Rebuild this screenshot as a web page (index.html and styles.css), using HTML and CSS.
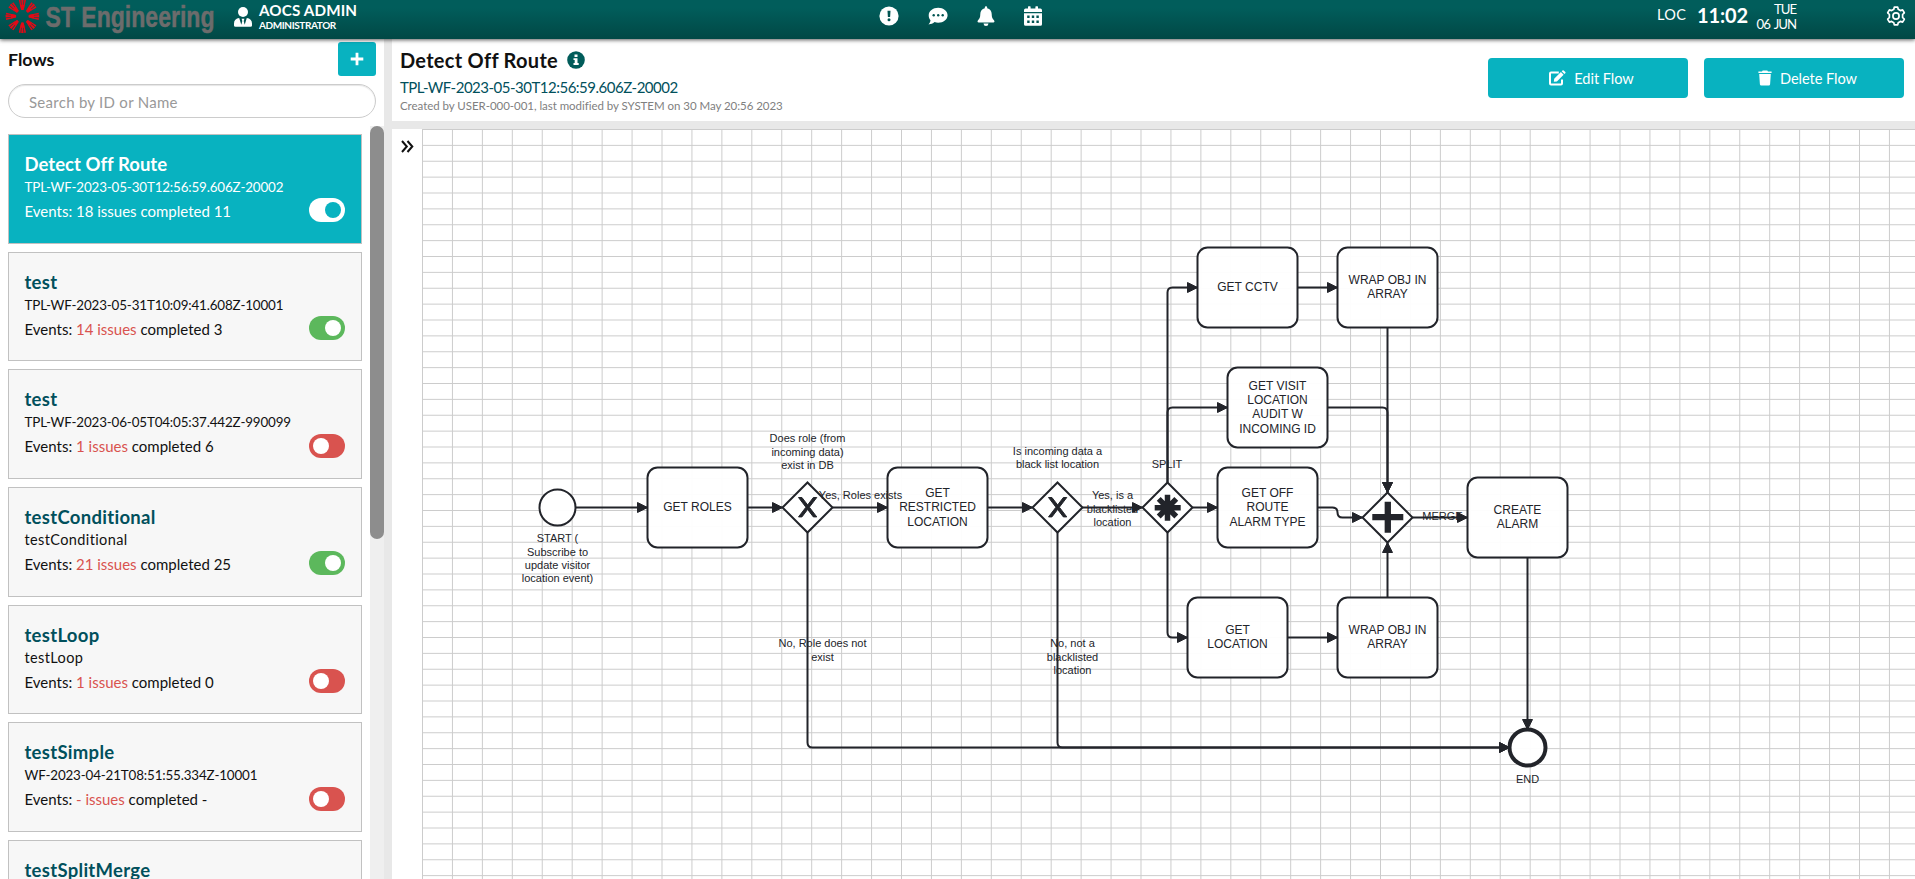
FILE: index.html
```
<!DOCTYPE html>
<html lang="en">
<head>
<meta charset="utf-8">
<title>Flows</title>
<link rel="stylesheet" href="styles.css">
</head>
<body>
<header class="topbar">
  <div class="brand">
    <svg class="brand-logo" width="220" height="39" viewBox="0 0 220 39">
      <defs>
        <g id="ray">
          <path d="M-3.6 -16.2 L-1.9 -16.6 L-.9 -6.5 L-1.3 -6.4Z M-1.2 -16.8 H1.2 L.4 -6.3 H-.4Z M3.6 -16.2 L1.9 -16.6 L.9 -6.5 L1.3 -6.4Z"/>
          <path d="M-2.2 -11.5 H2.2 L1.2 -6.3 H-1.2Z"/>
        </g>
      </defs>
      <g class="brand-mark" transform="translate(22.4 16.3)">
        <use href="#ray"/><use href="#ray" transform="rotate(45)"/><use href="#ray" transform="rotate(90)"/><use href="#ray" transform="rotate(135)"/>
        <use href="#ray" transform="rotate(180)"/><use href="#ray" transform="rotate(225)"/><use href="#ray" transform="rotate(270)"/><use href="#ray" transform="rotate(315)"/>
      </g>
      <text class="brand-text" x="45.5" y="27" textLength="169" lengthAdjust="spacingAndGlyphs">ST Engineering</text>
    </svg>
  </div>
  <div class="user">
    <svg width="18" height="20" viewBox="0 0 18 20" fill="#fff"><circle cx="9" cy="5" r="5"/><path fill-rule="evenodd" d="M5.2 11 C2 11.3 0 13.4 0 16.4 V18.4 Q0 19.8 1.5 19.8 H16.5 Q18 19.8 18 18.4 V16.4 C18 13.4 16 11.3 12.8 11 L10.7 17.8 L9.7 14 L10.4 11.8 H7.6 L8.3 14 L7.3 17.8 Z"/></svg>
    <div class="user-text">
      <div class="user-name">AOCS ADMIN</div>
      <div class="user-role">ADMINISTRATOR</div>
    </div>
  </div>
  <nav class="shortcuts">
    <svg width="20" height="20" viewBox="0 0 20 20"><circle cx="10" cy="10" r="9.6" fill="#fff"/><path d="M8.5 4.7 h3 l-.4 6.3 h-2.2z" fill="#015452"/><circle cx="10" cy="13.7" r="1.5" fill="#015452"/></svg>
    <svg width="20" height="20" viewBox="0 0 20 20"><path d="M10.2 1.7 C15.4 1.7 19.6 5 19.6 9.2 S15.4 16.7 10.2 16.7 C8.9 16.7 7.7 16.5 6.6 16.1 C5 17.4 3 18.4 .5 18.4 C1.6 17.2 2.4 15.8 2.5 14.3 C1.3 12.9 .7 11.1 .7 9.2 C.7 5 5 1.7 10.2 1.7Z" fill="#fff"/><g fill="#015452"><circle cx="5.7" cy="9.2" r="1.2"/><circle cx="10.2" cy="9.2" r="1.2"/><circle cx="14.7" cy="9.2" r="1.2"/></g></svg>
    <svg width="20" height="20" viewBox="0 0 20 20" fill="#fff"><path d="M10 .2 Q11.2 .2 11.2 1.5 V2.2 C14 2.8 15.7 5 15.7 7.9 C15.7 11.3 16.5 12.6 17.8 14 C19 15.2 18.5 16.4 17.3 16.4 H2.7 C1.5 16.4 1 15.2 2.2 14 C3.5 12.6 4.3 11.3 4.3 7.9 C4.3 5 6 2.8 8.8 2.2 V1.5 Q8.8 .2 10 .2Z M7.5 17.4 H12.5 Q12.3 19.9 10 19.9 T7.5 17.4Z"/></svg>
    <svg width="20" height="20" viewBox="0 0 20 20"><path d="M1 6 V4.2 Q1 2.6 2.6 2.6 H5 V.8 Q5 .2 5.6 .2 H7 Q7.6 .2 7.6 .8 V2.6 H12.4 V.8 Q12.4 .2 13 .2 H14.4 Q15 .2 15 .8 V2.6 H17.4 Q19 2.6 19 4.2 V6Z M1 7.2 H19 V18.2 Q19 19.8 17.4 19.8 H2.6 Q1 19.8 1 18.2Z" fill="#fff"/><path d="M4.2 9.6h2.4V12H4.2z M8.8 9.6h2.4V12H8.8z M13.4 9.6h2.4V12h-2.4z M4.2 14.6h2.4V17H4.2z M8.8 14.6h2.4V17H8.8z M13.4 14.6h2.4V17h-2.4z" fill="#015452"/></svg>
  </nav>
  <div class="clock">
    <span class="clock-zone">LOC</span>
    <span class="clock-time">11:02</span>
    <div class="clock-date"><div>TUE</div><div>06 JUN</div></div>
  </div>
  <svg class="settings" width="20" height="20" viewBox="0 0 20 20" fill="none" stroke="#fff" stroke-width="1.7" stroke-linejoin="round"><path d="M7.8 3.3 L8.3 1.1 H11.7 L12.2 3.3 L14.4 4.6 L16.6 3.9 L18.3 6.8 L16.6 8.5 V11.5 L18.3 13.2 L16.6 16.1 L14.4 15.4 L12.2 16.7 L11.7 18.9 H8.3 L7.8 16.7 L5.6 15.4 L3.4 16.1 L1.7 13.2 L3.4 11.5 V8.5 L1.7 6.8 L3.4 3.9 L5.6 4.6Z"/><circle cx="10" cy="10" r="3.1"/></svg>
</header>

<div class="workspace">
  <aside class="sidebar">
    <div class="sidebar-head">
      <h2>Flows</h2>
      <button class="add"><svg width="14" height="14" viewBox="0 0 14 14"><path d="M7 .7V13.3M.7 7H13.3" stroke="#fff" stroke-width="2.8"/></svg></button>
    </div>
    <input class="search" type="text" placeholder="Search by ID or Name">
    <div class="list-wrap">
      <div class="list">
        <article class="card selected">
          <div class="card-text"><h3>Detect Off Route</h3><p class="id">TPL-WF-2023-05-30T12:56:59.606Z-20002</p><p class="events">Events: <em>18 issues</em> completed 11</p></div>
          <span class="toggle on"></span>
        </article>
        <article class="card">
          <div class="card-text"><h3>test</h3><p class="id">TPL-WF-2023-05-31T10:09:41.608Z-10001</p><p class="events">Events: <em>14 issues</em> completed 3</p></div>
          <span class="toggle on"></span>
        </article>
        <article class="card">
          <div class="card-text"><h3>test</h3><p class="id">TPL-WF-2023-06-05T04:05:37.442Z-990099</p><p class="events">Events: <em>1 issues</em> completed 6</p></div>
          <span class="toggle"></span>
        </article>
        <article class="card">
          <div class="card-text"><h3>testConditional</h3><p class="id word">testConditional</p><p class="events">Events: <em>21 issues</em> completed 25</p></div>
          <span class="toggle on"></span>
        </article>
        <article class="card">
          <div class="card-text"><h3>testLoop</h3><p class="id word">testLoop</p><p class="events">Events: <em>1 issues</em> completed 0</p></div>
          <span class="toggle"></span>
        </article>
        <article class="card">
          <div class="card-text"><h3>testSimple</h3><p class="id">WF-2023-04-21T08:51:55.334Z-10001</p><p class="events">Events: <em>- issues</em> completed -</p></div>
          <span class="toggle"></span>
        </article>
        <article class="card">
          <div class="card-text"><h3>testSplitMerge</h3></div>
        </article>
      </div>
      <div class="scrollbar"><div class="thumb"></div></div>
    </div>
  </aside>

  <main class="main">
    <section class="flow-head">
      <div class="flow-info">
        <div class="flow-title"><h1>Detect Off Route</h1>
          <svg width="18" height="18" viewBox="0 0 18 18"><circle cx="9" cy="9" r="8.8" fill="#015c5a"/><path d="M7.5 3.5h3v2.6h-3z M6.500 7.200h4v4.900h1.200v1.900H6.500v-1.900h1.200V9.100H6.500z" fill="#fff"/></svg>
        </div>
        <p class="flow-id">TPL-WF-2023-05-30T12:56:59.606Z-20002</p>
        <p class="flow-meta">Created by USER-000-001, last modified by SYSTEM on 30 May 20:56 2023</p>
      </div>
      <div class="actions">
        <button class="action"><svg width="17" height="16" viewBox="0 0 17 16"><path d="M9.800 2.600 H2 Q1 2.600 1 3.600 V13.600 Q1 14.600 2 14.600 H12 Q13 14.600 13 13.600 V9.500" fill="none" stroke="#fff" stroke-width="2"/><path d="M5.200 8.700 L11.900 2 L14.600 4.700 L7.900 11.400 L4.800 11.800Z M12.700 1.200 L13.500 .4 Q14.100 -.1 14.700 .4 L16.300 2 Q16.800 2.600 16.300 3.200 L15.400 4Z" fill="#fff"/></svg>Edit Flow</button>
        <button class="action"><svg width="14" height="16" viewBox="0 0 14 16" fill="#fff"><path d="M.4 1.500 H4 L4.700 .5 H9.300 L10 1.500 H13.600 V3.100 H.4Z M1.200 4 H12.800 L12.100 14.200 Q12 15.500 10.700 15.500 H3.300 Q2 15.500 1.900 14.200Z"/></svg>Delete Flow</button>
      </div>
    </section>
    <section class="canvas">
      <div class="palette"><svg width="13" height="13" viewBox="0 0 13 13" fill="none" stroke="#111" stroke-width="2"><path d="M1 1 L5.800 6.500 L1 12 M6.500 1 L11.300 6.500 L6.500 12"/></svg></div>
      <div class="grid">
        <svg class="diagram" width="1493" height="750" viewBox="422 129 1493 750">
          <defs>
            <marker id="arrow" viewBox="0 0 20 20" refX="11" refY="10" markerWidth="20" markerHeight="20" markerUnits="userSpaceOnUse" orient="auto"><path d="M1 5 L11 10 L1 15Z" class="tip"/></marker>
            <path id="cross" d="M-9 -9.700 l7.430 9.710 -7.430 9.710 3.430 0 5.714 -7.464 5.714 7.464 3.430 0 -7.430 -9.710 7.430 -9.710 -3.430 0 -5.714 7.464 -5.714 -7.464Z"/>
          </defs>

          <g class="edges">
            <path d="M575.500 507.500H647.500"/>
            <path d="M747.500 507.500H782.500"/>
            <path d="M832.500 507.500H887.500"/>
            <path d="M987.500 507.500H1032.500"/>
            <path d="M1082.500 507.500H1142.500"/>
            <path d="M1192.500 507.500H1217.500"/>
            <path d="M1167.500 482.500V292.500Q1167.500 287.500 1172.500 287.500H1197.500"/>
            <path d="M1167.500 482.500V412.500Q1167.500 407.500 1172.500 407.500H1227.500"/>
            <path d="M1167.500 532.500V632.500Q1167.500 637.500 1172.500 637.500H1187.500"/>
            <path d="M1297.500 287.500H1337.500"/>
            <path d="M1287.500 637.500H1337.500"/>
            <path d="M1387.500 327.500V492.500"/>
            <path d="M1327.500 407.500H1382.500Q1387.500 407.500 1387.500 412.500V492.500"/>
            <path d="M1317.500 507.500H1332.500Q1337.500 507.500 1337.500 512.500Q1337.500 517.500 1342.500 517.500H1362.500"/>
            <path d="M1387.500 597.500V542.500"/>
            <path d="M1412.500 517.500H1467.500"/>
            <path d="M1527.500 557.500V729.500"/>
            <path d="M807.500 532.500V742.500Q807.500 747.500 812.500 747.500H1509.500"/>
            <path d="M1057.500 532.500V742.500Q1057.500 747.500 1062.500 747.500H1509.500"/>
          </g>

          <g class="shapes">
            <circle cx="557.500" cy="507.500" r="18"/>
            <circle cx="1527.500" cy="747.500" r="18" class="end"/>
            <rect x="647.500" y="467.500" width="100" height="80" rx="10"/>
            <rect x="887.500" y="467.500" width="100" height="80" rx="10"/>
            <rect x="1197.500" y="247.500" width="100" height="80" rx="10"/>
            <rect x="1337.500" y="247.500" width="100" height="80" rx="10"/>
            <rect x="1227.500" y="367.500" width="100" height="80" rx="10"/>
            <rect x="1217.500" y="467.500" width="100" height="80" rx="10"/>
            <rect x="1467.500" y="477.500" width="100" height="80" rx="10"/>
            <rect x="1187.500" y="597.500" width="100" height="80" rx="10"/>
            <rect x="1337.500" y="597.500" width="100" height="80" rx="10"/>
            <path d="M807.500 482.500l25 25l-25 25l-25 -25Z"/>
            <path d="M1057.500 482.500l25 25l-25 25l-25 -25Z"/>
            <path d="M1167.500 482.500l25 25l-25 25l-25 -25Z"/>
            <path d="M1387.500 492.500l25 25l-25 25l-25 -25Z"/>
          </g>
          <g class="signs">
            <use href="#cross" transform="translate(807.500 507.200)"/>
            <use href="#cross" transform="translate(1057.500 507.200)"/>
            <path class="star" d="M1167.500 494.700v26M1154.700 507.700h26M1158.700 498.900l17.600 17.600M1176.300 498.900l-17.600 17.600"/>
            <path class="plus" d="M1387.800 501.700v31M1372.300 517.200h31"/>
          </g>

          <g class="task-labels">
            <text x="697.500" y="511">GET ROLES</text>
            <text><tspan x="937.500" y="497">GET</tspan><tspan x="937.500" y="511">RESTRICTED</tspan><tspan x="937.500" y="526">LOCATION</tspan></text>
            <text x="1247.500" y="291">GET CCTV</text>
            <text><tspan x="1387.500" y="284">WRAP OBJ IN</tspan><tspan x="1387.500" y="298">ARRAY</tspan></text>
            <text><tspan x="1277.500" y="390">GET VISIT</tspan><tspan x="1277.500" y="404">LOCATION</tspan><tspan x="1277.500" y="418">AUDIT W</tspan><tspan x="1277.500" y="433">INCOMING ID</tspan></text>
            <text><tspan x="1267.500" y="497">GET OFF</tspan><tspan x="1267.500" y="511">ROUTE</tspan><tspan x="1267.500" y="526">ALARM TYPE</tspan></text>
            <text><tspan x="1517.500" y="514">CREATE</tspan><tspan x="1517.500" y="528">ALARM</tspan></text>
            <text><tspan x="1237.500" y="634">GET</tspan><tspan x="1237.500" y="648">LOCATION</tspan></text>
            <text><tspan x="1387.500" y="634">WRAP OBJ IN</tspan><tspan x="1387.500" y="648">ARRAY</tspan></text>
          </g>
          <g class="notes">
            <text><tspan x="557.500" y="542">START (</tspan><tspan x="557.500" y="556">Subscribe to</tspan><tspan x="557.500" y="569">update visitor</tspan><tspan x="557.500" y="582">location event)</tspan></text>
            <text><tspan x="807.500" y="442">Does role (from</tspan><tspan x="807.500" y="456">incoming data)</tspan><tspan x="807.500" y="469">exist in DB</tspan></text>
            <text x="860.500" y="499">Yes, Roles exists</text>
            <text><tspan x="822.500" y="647">No, Role does not</tspan><tspan x="822.500" y="661">exist</tspan></text>
            <text><tspan x="1057.500" y="455">Is incoming data a</tspan><tspan x="1057.500" y="468">black list location</tspan></text>
            <text><tspan x="1112.500" y="499">Yes, is a</tspan><tspan x="1112.500" y="513">blacklisted</tspan><tspan x="1112.500" y="526">location</tspan></text>
            <text><tspan x="1072.500" y="647">No, not a</tspan><tspan x="1072.500" y="661">blacklisted</tspan><tspan x="1072.500" y="674">location</tspan></text>
            <text x="1167" y="468">SPLIT</text>
            <text x="1442.500" y="520">MERGE</text>
            <text x="1527.500" y="783">END</text>
          </g>
        </svg>
      </div>
    </section>
  </main>
</div>
</body>
</html>
```
FILE: styles.css
```
* { box-sizing: border-box; }

body {
  margin: 0;
  height: 879px;
  overflow: hidden;
  background: #fff;
  color: #111;
  font-family: Lato, "Open Sans", sans-serif;
}

h1, h2, h3, p { margin: 0; }
button { border: 0; padding: 0; font: inherit; color: inherit; }
svg { display: block; flex: none; }

/* top bar */
.topbar {
  position: relative;
  z-index: 1;
  display: flex;
  height: 39px;
  color: #fff;
  background: linear-gradient(#015d5b 20%, #014845);
  box-shadow: 0 1px 4px rgba(0, 0, 0, .65);
}
.brand { width: 234px; }
.brand-logo { overflow: visible; }
.brand-mark { fill: #e30a17; }
.brand-text { font: bold 29px "Liberation Sans Narrow", "Liberation Sans", sans-serif; fill: #6c6c6c; stroke: #6c6c6c; stroke-width: .5; }
.user { display: flex; gap: 7px; width: 645px; padding-top: 7px; }
.user-text { margin-top: -6px; font-weight: 700; white-space: nowrap; }
.user-name { font-size: 15.2px; line-height: 18px; letter-spacing: .15px; }
.user-role { font-size: 10px; line-height: 13px; letter-spacing: -.4px; }
.shortcuts { display: flex; gap: 28.5px; width: 778px; padding-top: 6px; }
.shortcuts svg:last-child { margin-left: -2px; }
.clock { display: flex; width: 229px; white-space: nowrap; }
.clock-zone { width: 40px; font-size: 14.5px; line-height: 30px; letter-spacing: .37px; }
.clock-time { width: 53px; font-size: 20px; font-weight: 700; line-height: 31px; letter-spacing: -.1px; }
.clock-date { width: 46px; font-size: 13.2px; line-height: 15px; padding-top: 2px; letter-spacing: -1px; word-spacing: 1.8px; text-align: right; }
.settings { margin-top: 6px; }

.workspace { display: flex; height: 840px; }

/* flow list */
.sidebar { display: flex; flex-direction: column; width: 384px; padding: 3px 0 0 8px; }
.sidebar-head { display: flex; justify-content: space-between; width: 368px; height: 34px; }
.sidebar-head h2 { font-size: 17.8px; line-height: 34px; }
.add { display: grid; place-items: center; width: 38px; height: 34px; border-radius: 3px; background: #08b2c0; }
.search {
  width: 368px;
  height: 34px;
  margin-top: 8px;
  padding: 2px 20px 0;
  border: 1px solid #ccc;
  border-radius: 17px;
  outline: 0;
  box-shadow: inset 0 1px 1px rgba(0, 0, 0, .1);
  font: 15px Lato, sans-serif;
  letter-spacing: .27px;
}
.search::placeholder { color: #999; }
.list-wrap { display: flex; gap: 8px; height: 753px; margin-top: 8px; }
.list { display: flex; flex-direction: column; gap: 8px; width: 354px; padding-top: 8px; overflow: hidden; }
.scrollbar { width: 14px; background: #efefef; }
.thumb { height: 413px; border-radius: 7px; background: #8d8d8d; }

.card {
  display: flex;
  flex: none;
  align-items: flex-end;
  justify-content: space-between;
  height: 109.7px;
  padding: 18px 16px 20.5px 15.5px;
  border: 1px solid #c1c1c1;
  background: #f7f7f7;
}
.card-text { display: flex; flex-direction: column; gap: 3px; align-self: flex-start; white-space: nowrap; }
.card h3 { margin-bottom: -1px; color: #01505c; font-size: 18.5px; line-height: 22px; letter-spacing: .3px; }
.card .id { font-size: 13.4px; line-height: 20px; letter-spacing: -.15px; }
.card .id.word { font-size: 14.5px; letter-spacing: .38px; }
.card .events { font-size: 15px; line-height: 22px; }
.card em { color: #d9534f; font-style: normal; }
.card.selected { color: #fff; background: #08b2c0; }
.card.selected h3 { color: #fff; letter-spacing: .04px; }
.card.selected em { color: inherit; }

.toggle {
  width: 36px;
  height: 24px;
  padding: 4px;
  border-radius: 12px;
  background: #d9534f;
}
.toggle::before { content: ""; display: block; width: 16px; height: 16px; border-radius: 50%; background: #fff; }
.toggle.on { background: #5cb85c; }
.toggle.on::before { margin-left: 12px; }
.selected .toggle.on { background: #fff; }
.selected .toggle.on::before { background: #08b2c0; }

/* flow details */
.main { display: flex; flex: 1; flex-direction: column; min-width: 0; border-left: 8px solid #e8e8e8; }
.flow-head {
  display: flex;
  justify-content: space-between;
  height: 90px;
  padding: 0 11px 0 8px;
  border-bottom: 8px solid #e8e8e8;
}
.flow-info { padding-top: 7px; white-space: nowrap; }
.flow-title { display: flex; align-items: center; gap: 9px; height: 27px; }
.flow-title h1 { font-size: 20px; line-height: 26px; letter-spacing: .28px; }
.flow-id { margin-top: 3px; color: #01505c; font-size: 15px; line-height: 22px; letter-spacing: -.5px; }
.flow-meta { color: #808080; font-size: 11.5px; line-height: 15px; letter-spacing: -.04px; }
.actions { display: flex; gap: 16px; padding-top: 19px; }
.action {
  display: flex;
  align-items: center;
  justify-content: center;
  gap: 8px;
  width: 200px;
  height: 40px;
  padding-left: 7px;
  border-radius: 4px;
  background: #08b2c0;
  color: #fff;
  font-size: 14.6px;
  letter-spacing: -.05px;
}

/* diagram */
.canvas { display: flex; height: 750px; }
.palette { width: 30px; padding: 11px 0 0 9px; }
.grid {
  flex: 1;
  background-image:
    linear-gradient(to right, #ccc 1px, transparent 1px),
    linear-gradient(to bottom, #ccc 1px, transparent 1px);
  background-size: 29.95px 15.88px;
}
.edges path { fill: none; stroke: #22242a; stroke-width: 2; marker-end: url(#arrow); }
.tip { fill: #22242a; stroke: #22242a; stroke-width: 1; }
.shapes * { fill: #fff; fill-opacity: .95; stroke: #22242a; stroke-width: 2; }
.shapes .end { stroke-width: 4; }
.signs { fill: #22242a; stroke: #22242a; stroke-width: 1; }
.signs .star { stroke-width: 5.5; }
.signs .plus { stroke-width: 6.3; }
.task-labels, .notes { fill: #22242a; font: 12px Arial, "Liberation Sans", sans-serif; text-anchor: middle; }
.notes { font-size: 11px; }
```
